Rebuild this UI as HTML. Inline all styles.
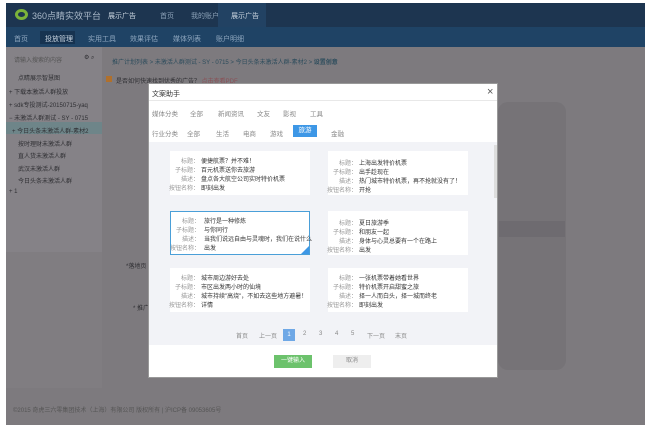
<!DOCTYPE html>
<html><head><meta charset="utf-8"><style>
*{margin:0;padding:0;box-sizing:border-box}
body{width:654px;height:438px;background:#fff;position:relative;overflow:hidden;font-family:"Liberation Sans","Noto Sans CJK SC",sans-serif;font-size:6.5px;color:#333}
.a{position:absolute;white-space:nowrap}
.g{color:#2f2f33}
.card{position:absolute;background:#fff;width:140px;height:44px;white-space:nowrap;font-size:6px}
.card .r{position:absolute;left:0;width:140px;height:9px}
.card .l{position:absolute;right:111px;color:#999;text-align:right;white-space:nowrap}
.card .v{position:absolute;left:31px;color:#333;white-space:nowrap}
</style></head><body>
<div class="a" style="left:6px;top:3px;width:639px;height:422px;background:#7d7a7e"></div>
<div class="a" style="left:6px;top:3px;width:639px;height:24px;background:#1d3550"></div>
<div class="a" style="left:218px;top:3px;width:48px;height:24px;background:#224263"></div>
<div class="a" style="left:15px;top:9px;width:13px;height:11px;border-radius:50%;border:3px solid #7bb33a"></div>
<div class="a" style="left:32px;top:9px;font-size:9px;color:#a9b8c8">360点睛实效平台</div>
<div class="a" style="left:108px;top:11px;font-size:7px;color:#c8d3de">展示广告</div>
<div class="a" style="left:160px;top:11px;font-size:7px;color:#8aa0b6">首页</div>
<div class="a" style="left:191px;top:11px;font-size:7px;color:#8aa0b6">我的账户</div>
<div class="a" style="left:231px;top:11px;font-size:7px;color:#c8d3de">展示广告</div>
<div class="a" style="left:6px;top:27px;width:639px;height:20px;background:#1f4365"></div>
<div class="a" style="left:40px;top:31px;width:35px;height:13px;background:#173350"></div>
<div class="a" style="left:14px;top:34px;font-size:7px;color:#8ea6be">首页</div>
<div class="a" style="left:45px;top:34px;font-size:7px;color:#c8d4e0">投放管理</div>
<div class="a" style="left:88px;top:34px;font-size:7px;color:#8ea6be">实用工具</div>
<div class="a" style="left:130px;top:34px;font-size:7px;color:#8ea6be">效果评估</div>
<div class="a" style="left:173px;top:34px;font-size:7px;color:#8ea6be">媒体列表</div>
<div class="a" style="left:216px;top:34px;font-size:7px;color:#8ea6be">账户明细</div>
<div class="a" style="left:6px;top:47px;width:96px;height:205px;background:#858287"></div>
<div class="a" style="left:6px;top:252px;width:96px;height:136px;background:#807d81"></div>
<div class="a" style="left:6px;top:122px;width:96px;height:12px;background:#6e8589"></div>
<div class="a g" style="left:14px;top:55px;color:#555;font-size:6px">请输入搜索的内容</div>
<div class="a g" style="left:84px;top:54px;font-size:6px">⚙ ⌕</div>
<div class="a g" style="left:18px;top:73px;font-size:6px">点睛展示智慧图</div>
<div class="a g" style="left:9px;top:87px;font-size:6px">+ 下载本激活人群投放</div>
<div class="a g" style="left:9px;top:100px;font-size:6px">+ sdk专投测试-20150715-yaq</div>
<div class="a g" style="left:9px;top:113px;font-size:6px">− 未激活人群测试 - SY - 0715</div>
<div class="a g" style="left:12px;top:126px;font-size:6px">+ 今日头条未激活人群-素材2</div>
<div class="a g" style="left:18px;top:139px;font-size:6px">按时理财未激活人群</div>
<div class="a g" style="left:18px;top:151px;font-size:6px">直人货未激活人群</div>
<div class="a g" style="left:18px;top:164px;font-size:6px">武汉未激活人群</div>
<div class="a g" style="left:18px;top:176px;font-size:6px">今日头条未激活人群</div>
<div class="a g" style="left:9px;top:189px;font-size:6px">+ 1</div>
<div class="a g" style="left:112px;top:57px;color:#2c4c5c;font-size:6px">推广计划列表 &gt; 未激活人群测试 - SY - 0715 &gt; 今日头条未激活人群-素材2 &gt; <b>设置创意</b></div>
<div class="a" style="left:106px;top:76px;width:6px;height:6px;background:#b0702c"></div>
<div class="a g" style="left:116px;top:76px;font-size:6px">是否如何快速找到优秀的广告？ <span style="color:#8a4f55;text-decoration:underline">点击查看PDF</span></div>
<div class="a" style="left:498px;top:102px;width:68px;height:268px;border-radius:10px;background:#767377"></div>
<div class="a" style="left:499px;top:221px;width:66px;height:16px;background:#6e6b70"></div>
<div class="a g" style="left:126px;top:261px;font-size:6px">*落地页</div>
<div class="a g" style="left:133px;top:303px;font-size:6px">* 推广</div>
<div class="a g" style="left:13px;top:405px;color:#555;font-size:6px">©2015 奇虎三六零集团技术（上海）有限公司 版权所有 | 沪ICP备 09053605号</div>

<div class="a" style="left:148px;top:83px;width:350px;height:295px;background:#fff;border:1px solid #999"></div>
<div class="a" style="left:152px;top:89px;font-size:7px;color:#333">文案助手</div>
<div class="a" style="left:487px;top:86px;font-size:11px;color:#555">×</div>
<div class="a" style="left:149px;top:100px;width:348px;height:1px;background:#e8e8e8"></div>
<div class="a" style="left:152px;top:108px;color:#888">媒体分类</div>
<div class="a" style="left:190px;top:108px;color:#888">全部</div>
<div class="a" style="left:218px;top:108px;color:#888">新闻资讯</div>
<div class="a" style="left:257px;top:108px;color:#888">文友</div>
<div class="a" style="left:283px;top:108px;color:#888">影视</div>
<div class="a" style="left:310px;top:108px;color:#888">工具</div>
<div class="a" style="left:152px;top:128px;color:#888">行业分类</div>
<div class="a" style="left:187px;top:128px;color:#888">全部</div>
<div class="a" style="left:216px;top:128px;color:#888">生活</div>
<div class="a" style="left:243px;top:128px;color:#888">电商</div>
<div class="a" style="left:270px;top:128px;color:#888">游戏</div>
<div class="a" style="left:293px;top:125px;width:24px;height:12px;background:#3d97e6;color:#fff;text-align:center;line-height:12px">旅游</div>
<div class="a" style="left:331px;top:128px;color:#888">金融</div>
<div class="a" style="left:149px;top:142px;width:348px;height:203px;background:#f2f3f7"></div>
<div class="a" style="left:494px;top:145px;width:3px;height:53px;background:#ddd"></div>

<div class="card" style="left:170px;top:151px">
<div class="r" style="top:5px"><span class="l">标题：</span><span class="v">便捷航票？并不难！</span></div>
<div class="r" style="top:14px"><span class="l">子标题：</span><span class="v">百元机票送你去旅游</span></div>
<div class="r" style="top:23px"><span class="l">描述：</span><span class="v">盘点各大航空公司实时特价机票</span></div>
<div class="r" style="top:32px"><span class="l">按钮名称：</span><span class="v">即刻出发</span></div>
</div>
<div class="card" style="left:328px;top:151px">
<div class="r" style="top:7px"><span class="l">标题：</span><span class="v">上海出发特价机票</span></div>
<div class="r" style="top:16px"><span class="l">子标题：</span><span class="v">出手趁现在</span></div>
<div class="r" style="top:25px"><span class="l">描述：</span><span class="v">热门城市特价机票，再不抢就没有了！</span></div>
<div class="r" style="top:34px"><span class="l">按钮名称：</span><span class="v">开抢</span></div>
</div>
<div class="card" style="left:170px;top:211px;border:1px solid #4a9fd8">
<div class="r" style="top:4px"><span class="l">标题：</span><span class="v" style="left:33px">旅行是一种修炼</span></div>
<div class="r" style="top:13px"><span class="l">子标题：</span><span class="v" style="left:33px">与你同行</span></div>
<div class="r" style="top:22px"><span class="l">描述：</span><span class="v" style="left:33px">当我们说远自由与灵魂时，我们在说什么</span></div>
<div class="r" style="top:31px"><span class="l">按钮名称：</span><span class="v" style="left:33px">出发</span></div>
<div class="a" style="right:0;bottom:0;width:0;height:0;border-left:8px solid transparent;border-bottom:8px solid #3d97e6"></div>
</div>
<div class="card" style="left:328px;top:211px">
<div class="r" style="top:7px"><span class="l">标题：</span><span class="v">夏日旅游季</span></div>
<div class="r" style="top:16px"><span class="l">子标题：</span><span class="v">和朋友一起</span></div>
<div class="r" style="top:25px"><span class="l">描述：</span><span class="v">身体与心灵总要有一个在路上</span></div>
<div class="r" style="top:34px"><span class="l">按钮名称：</span><span class="v">出发</span></div>
</div>
<div class="card" style="left:170px;top:268px">
<div class="r" style="top:5px"><span class="l">标题：</span><span class="v">城市周边游好去处</span></div>
<div class="r" style="top:14px"><span class="l">子标题：</span><span class="v">市区出发两小时的仙境</span></div>
<div class="r" style="top:23px"><span class="l">描述：</span><span class="v">城市持续"高烧"，不如去这些地方避暑！</span></div>
<div class="r" style="top:32px"><span class="l">按钮名称：</span><span class="v">详情</span></div>
</div>
<div class="card" style="left:328px;top:268px">
<div class="r" style="top:5px"><span class="l">标题：</span><span class="v">一张机票带着她看世界</span></div>
<div class="r" style="top:14px"><span class="l">子标题：</span><span class="v">特价机票开启甜蜜之旅</span></div>
<div class="r" style="top:23px"><span class="l">描述：</span><span class="v">择一人而白头，择一城而终老</span></div>
<div class="r" style="top:32px"><span class="l">按钮名称：</span><span class="v">即刻出发</span></div>
</div>

<div class="a" style="left:236px;top:331px;color:#888;font-size:6px">首页</div>
<div class="a" style="left:259px;top:331px;color:#888;font-size:6px">上一页</div>
<div class="a" style="left:283px;top:329px;width:12px;height:12px;background:#6fa8e6;color:#fff;text-align:center;line-height:12px;font-size:6px">1</div>
<div class="a" style="left:303px;top:331px;color:#888;font-size:6px">2</div>
<div class="a" style="left:319px;top:331px;color:#888;font-size:6px">3</div>
<div class="a" style="left:335px;top:331px;color:#888;font-size:6px">4</div>
<div class="a" style="left:351px;top:331px;color:#888;font-size:6px">5</div>
<div class="a" style="left:367px;top:331px;color:#888;font-size:6px">下一页</div>
<div class="a" style="left:395px;top:331px;color:#888;font-size:6px">末页</div>
<div class="a" style="left:274px;top:355px;width:38px;height:13px;background:#6cc26c;color:#fff;text-align:center;line-height:13px;font-size:6px">一键输入</div>
<div class="a" style="left:333px;top:355px;width:38px;height:13px;background:#eee;color:#888;text-align:center;line-height:13px;font-size:6px">取消</div>
</body></html>
